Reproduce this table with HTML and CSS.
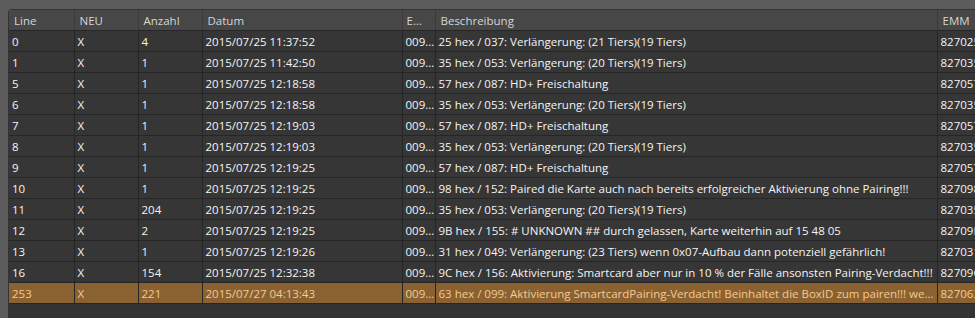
FILE: index.html
```html
<!DOCTYPE html>
<html lang="de">
<head>
    <meta charset="UTF-8">
    <title>EMM Log</title>
    <link rel="stylesheet" href="styles.css">
</head>
<body>
    <div class="panel">
        <table class="log">
            <colgroup>
                <col class="c-line">
                <col class="c-neu">
                <col class="c-anzahl">
                <col class="c-datum">
                <col class="c-e">
                <col class="c-desc">
                <col class="c-emm">
            </colgroup>
            <thead>
                <tr>
                    <th>Line</th><th>NEU</th><th>Anzahl</th><th>Datum</th><th class="narrow">ECM-ID</th><th>Beschreibung</th><th>EMM</th>
                </tr>
            </thead>
            <tbody>
                <tr><td>0</td><td>X</td><td>4</td><td>2015/07/25 11:37:52</td><td>0095D8</td><td>25 hex / 037: Verlängerung: (21 Tiers)(19 Tiers)</td><td>827025A4C1</td></tr>
                <tr><td>1</td><td>X</td><td>1</td><td>2015/07/25 11:42:50</td><td>0095D8</td><td>35 hex / 053: Verlängerung: (20 Tiers)(19 Tiers)</td><td>827035A4C1</td></tr>
                <tr><td>5</td><td>X</td><td>1</td><td>2015/07/25 12:18:58</td><td>0095D8</td><td>57 hex / 087: HD+ Freischaltung</td><td>827057A4C1</td></tr>
                <tr><td>6</td><td>X</td><td>1</td><td>2015/07/25 12:18:58</td><td>0095D8</td><td>35 hex / 053: Verlängerung: (20 Tiers)(19 Tiers)</td><td>827035A4C1</td></tr>
                <tr><td>7</td><td>X</td><td>1</td><td>2015/07/25 12:19:03</td><td>0095D8</td><td>57 hex / 087: HD+ Freischaltung</td><td>827057A4C1</td></tr>
                <tr><td>8</td><td>X</td><td>1</td><td>2015/07/25 12:19:03</td><td>0095D8</td><td>35 hex / 053: Verlängerung: (20 Tiers)(19 Tiers)</td><td>827035A4C1</td></tr>
                <tr><td>9</td><td>X</td><td>1</td><td>2015/07/25 12:19:25</td><td>0095D8</td><td>57 hex / 087: HD+ Freischaltung</td><td>827057A4C1</td></tr>
                <tr><td>10</td><td>X</td><td>1</td><td>2015/07/25 12:19:25</td><td>0095D8</td><td>98 hex / 152: Paired die Karte auch nach bereits erfolgreicher Aktivierung ohne Pairing!!!</td><td>827098A4C1</td></tr>
                <tr><td>11</td><td>X</td><td>204</td><td>2015/07/25 12:19:25</td><td>0095D8</td><td>35 hex / 053: Verlängerung: (20 Tiers)(19 Tiers)</td><td>827035A4C1</td></tr>
                <tr><td>12</td><td>X</td><td>2</td><td>2015/07/25 12:19:25</td><td>0095D8</td><td>9B hex / 155: # UNKNOWN ## durch gelassen, Karte weiterhin auf 15 48 05</td><td>82709BA4C1</td></tr>
                <tr><td>13</td><td>X</td><td>1</td><td>2015/07/25 12:19:26</td><td>0095D8</td><td>31 hex / 049: Verlängerung: (23 Tiers) wenn 0x07-Aufbau dann potenziell gefährlich!</td><td>827031A4C1</td></tr>
                <tr><td>16</td><td>X</td><td>154</td><td>2015/07/25 12:32:38</td><td>0095D8</td><td>9C hex / 156: Aktivierung: Smartcard aber nur in 10 % der Fälle ansonsten Pairing-Verdacht!!!</td><td>82709CA4C1</td></tr>
                <tr class="selected"><td>253</td><td>X</td><td>221</td><td>2015/07/27 04:13:43</td><td>0095D8</td><td>63 hex / 099: Aktivierung SmartcardPairing-Verdacht! Beinhaltet die BoxID zum pairen!!! wenn Karte bereits aktiviert</td><td>827063A4C1</td></tr>
            </tbody>
        </table>
    </div>
</body>
</html>
```

FILE: styles.css
```css
/* dark list view */
body {
    margin: 0;
    padding: 9px 0 0 8px;
    height: 318px;
    box-sizing: border-box;
    overflow: hidden;
    background-color: #5c5c5c;
    font-family: "Open Sans", "Noto Sans", sans-serif;
    font-size: 11.5px;
}

.panel {
    height: 100%;
    padding: 1px 0 0 1px;
    box-sizing: border-box;
    background-color: #333333;
    border-top-left-radius: 4px;
    overflow: hidden;
}

.log {
    table-layout: fixed;
    width: 1079px;
    border-collapse: collapse;
}

.c-line { width: 65px; }
.c-neu { width: 64px; }
.c-anzahl { width: 64px; }
.c-datum { width: 200px; }
.c-e { width: 33px; }
.c-desc { width: 502px; }
.c-emm { width: 151px; }

.log th,
.log td {
    height: 20px;
    padding: 0 0 0 3px;
    white-space: nowrap;
    overflow: hidden;
    text-overflow: ellipsis;
    text-align: left;
    border-right: 1px solid #262626;
    border-bottom: 1px solid #262626;
}

.log th {
    padding-left: 5px;
    font-weight: normal;
    color: #d6d6d6;
    background-color: #474747;
    border-right-color: #3a3a3a;
}

.log th.narrow {
    padding: 0 8px 0 4px;
}

.log td {
    color: #f4f4f4;
    background-color: #363636;
}

.log tr.selected td {
    color: #f6c98e;
    background-color: #8a6232;
}
```
